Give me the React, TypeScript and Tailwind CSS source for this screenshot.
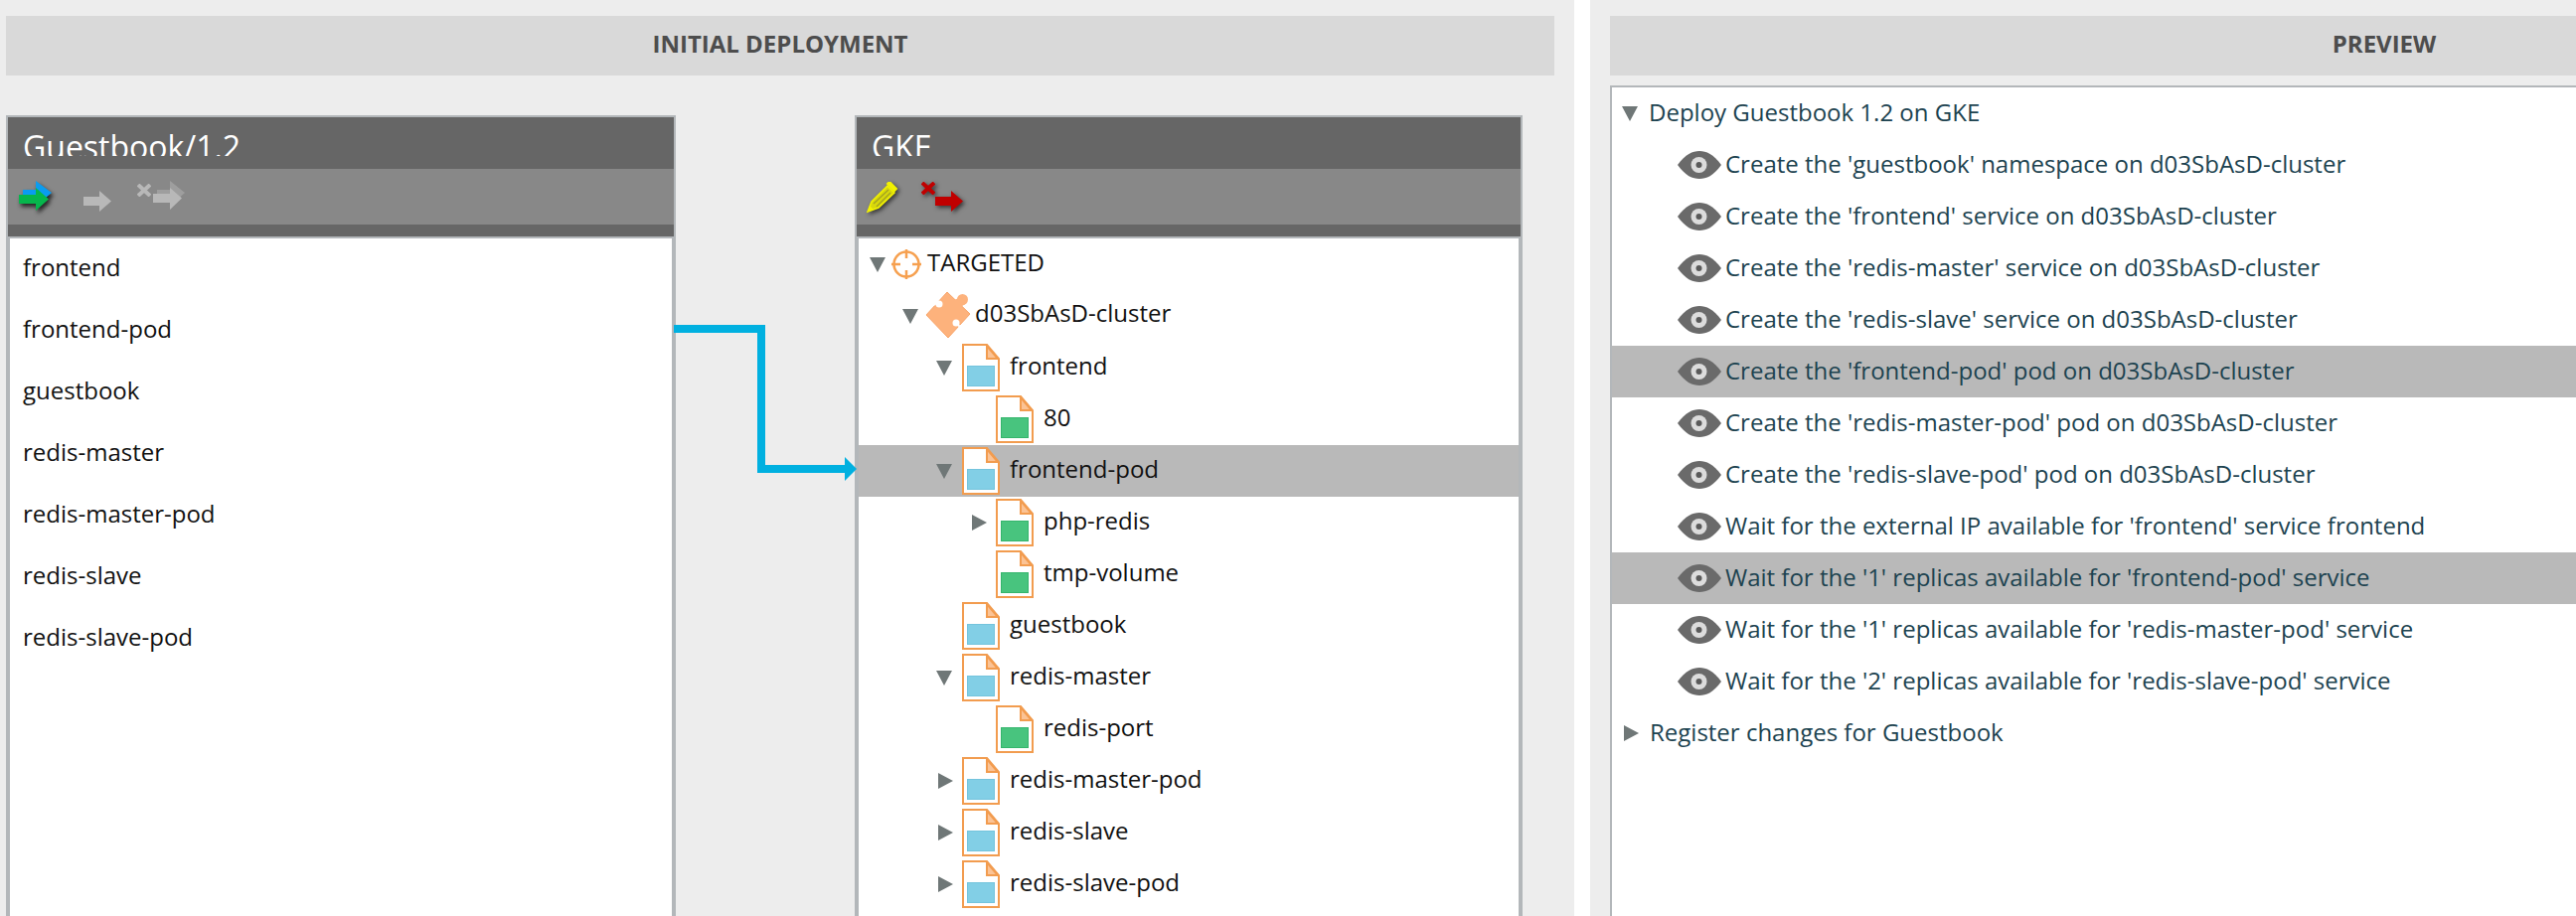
import React from 'react'

const leftItems = ['frontend', 'frontend-pod', 'guestbook', 'redis-master', 'redis-master-pod', 'redis-slave', 'redis-slave-pod']

type Row = { label: string; level: 0 | 1 | 2 | 3; open?: boolean; closed?: boolean; icon: 'target' | 'puzzle' | 'blue' | 'green'; active?: boolean }

const treeRows: Row[] = [
  { label: 'TARGETED', level: 0, open: true, icon: 'target' },
  { label: 'd03SbAsD-cluster', level: 1, open: true, icon: 'puzzle' },
  { label: 'frontend', level: 2, open: true, icon: 'blue' },
  { label: '80', level: 3, icon: 'green' },
  { label: 'frontend-pod', level: 2, open: true, icon: 'blue', active: true },
  { label: 'php-redis', level: 3, closed: true, icon: 'green' },
  { label: 'tmp-volume', level: 3, icon: 'green' },
  { label: 'guestbook', level: 2, icon: 'blue' },
  { label: 'redis-master', level: 2, open: true, icon: 'blue' },
  { label: 'redis-port', level: 3, icon: 'green' },
  { label: 'redis-master-pod', level: 2, closed: true, icon: 'blue' },
  { label: 'redis-slave', level: 2, closed: true, icon: 'blue' },
  { label: 'redis-slave-pod', level: 2, closed: true, icon: 'blue' },
]

const previewRows = [
  { label: "Create the 'guestbook' namespace on d03SbAsD-cluster" },
  { label: "Create the 'frontend' service on d03SbAsD-cluster" },
  { label: "Create the 'redis-master' service on d03SbAsD-cluster" },
  { label: "Create the 'redis-slave' service on d03SbAsD-cluster" },
  { label: "Create the 'frontend-pod' pod on d03SbAsD-cluster", active: true },
  { label: "Create the 'redis-master-pod' pod on d03SbAsD-cluster" },
  { label: "Create the 'redis-slave-pod' pod on d03SbAsD-cluster" },
  { label: "Wait for the external IP available for 'frontend' service frontend" },
  { label: "Wait for the '1' replicas available for 'frontend-pod' service", active: true },
  { label: "Wait for the '1' replicas available for 'redis-master-pod' service" },
  { label: "Wait for the '2' replicas available for 'redis-slave-pod' service" },
]

const levelPad = ['pl-[11px]', 'pl-[44px]', 'pl-[78px]', 'pl-[112px]']
const levelSlot = ['w-[21px]', 'w-[23px]', 'w-[26px]', 'w-[26px]']
const levelText = ['ml-[5px] pb-[4px]', 'ml-[4px] pb-[7px]', 'ml-[10px] pb-[4px]', 'ml-[10px] pb-[4px]']

function Caret({ open }: { open?: boolean }) {
  if (open) {
    return (
      <svg width="16" height="15" viewBox="0 0 16 15" className="block">
        <path d="M0 0H16L8 15Z" fill="#6f7777" />
      </svg>
    )
  }
  return (
    <svg width="16" height="16" viewBox="0 0 16 16" className="ml-[2px] block">
      <path d="M0 0L15 8L0 16Z" fill="#6f7777" />
    </svg>
  )
}

function PageIcon({ color, edge }: { color: string; edge: string }) {
  return (
    <svg width="38" height="48" viewBox="0 0 38 48" className="block shrink-0">
      <path d="M1 1H25L37 15V47H1Z" fill="#fff" stroke="#f29c4f" strokeWidth="2" />
      <path d="M25 2V15H36Z" fill="#fbc395" stroke="#f29c4f" strokeWidth="2" />
      <rect x="4" y="20" width="30" height="25" fill="#fff" opacity="0.6" />
      <rect x="5.5" y="22.5" width="27" height="20" fill={color} stroke={edge} strokeWidth="1" />
    </svg>
  )
}

function TargetIcon() {
  return (
    <svg width="32" height="32" viewBox="0 0 32 32" className="block shrink-0">
      <circle cx="16" cy="16" r="12.5" fill="none" stroke="#f6a04f" strokeWidth="2.5" />
      <path d="M16 1V10M16 22V31M1 16H10M22 16H31" stroke="#f6a04f" strokeWidth="2.5" />
    </svg>
  )
}

function PuzzleIcon() {
  return (
    <svg width="46" height="48" viewBox="0 0 46 48" className="-mt-[2px] block shrink-0">
      <path d="M22 1L45 23L23 47L1 24Z" fill="#fdb27c" stroke="#f8a56a" strokeWidth="1" />
      <circle cx="37.5" cy="8.5" r="5.5" fill="#fdb27c" />
      <path d="M29 9L36 6L40 13L36 16Z" fill="#fdb27c" />
      <circle cx="14" cy="13" r="3.5" fill="#fff" />
      <path d="M9 14L12 11" stroke="#fff" strokeWidth="2" />
      <circle cx="31" cy="32" r="3.5" fill="#fff" />
      <path d="M33 34L36 37" stroke="#fff" strokeWidth="2" />
    </svg>
  )
}

function EyeIcon() {
  return (
    <svg width="44" height="28" viewBox="0 0 44 28" className="block shrink-0">
      <path d="M0 14C8 3 15 0 22 0C29 0 36 3 44 14C36 25 29 28 22 28C15 28 8 25 0 14Z" fill="#6a6a6a" />
      <circle cx="21.5" cy="14" r="8" fill="#dcdcdc" />
      <circle cx="21.5" cy="14" r="3" fill="#5a5a5a" />
    </svg>
  )
}

function GrayArrow({ fill = '#b8b8b8' }: { fill?: string }) {
  return (
    <svg width="28" height="21" viewBox="0 0 28 21" className="block">
      <path d="M0 6H16V0L28 10.5L16 21V15H0Z" fill={fill} />
    </svg>
  )
}

function DeployAllIcon() {
  return (
    <svg width="36" height="38" viewBox="0 0 36 38" className="block drop-shadow-[2px_3px_2px_rgba(0,0,0,0.75)]">
      <path d="M5 9H18V0L34 12L22 22H5Z" fill="#0a9cf0" />
      <path d="M1 14H18V7L31 18.5L18 30V23H1Z" fill="#06b64c" />
    </svg>
  )
}

function DeleteDeployedIcon() {
  return (
    <div className="flex items-start">
      <svg width="14" height="13" viewBox="0 0 14 13" className="mt-[3px] block">
        <path d="M1 1L13 12M13 1L1 12" stroke="#b8b8b8" strokeWidth="4" />
      </svg>
      <svg width="32" height="33" viewBox="0 0 32 33" className="ml-[2px] block">
        <path d="M4 9H17V0L32 12L22 21H4Z" fill="#a8a8a8" opacity="0.7" />
        <path d="M0 13H17V7L29 17.5L17 29V22H0Z" fill="#b8b8b8" />
      </svg>
    </div>
  )
}

function PencilIcon() {
  return (
    <svg width="32" height="32" viewBox="0 0 32 32" className="block drop-shadow-[2px_2px_2px_rgba(0,0,0,0.6)]">
      <path d="M1 30L5 20L21 4L28 11L12 26Z" fill="#d8d80c" stroke="#f2f200" strokeWidth="1.5" />
      <path d="M7 22L22 8M10 25L24 11" stroke="#a5a520" strokeWidth="1.5" />
      <path d="M21 2L23 0L30 7L28 9Z" fill="#f2f200" stroke="#f2f200" strokeWidth="2" />
      <path d="M1 30L3 24L7 28Z" fill="#f2f200" />
    </svg>
  )
}

function DeleteIcon() {
  return (
    <div className="flex items-start drop-shadow-[2px_2px_2px_rgba(0,0,0,0.6)]">
      <svg width="14" height="13" viewBox="0 0 14 13" className="mt-[3px] block">
        <path d="M1 1L13 12M13 1L1 12" stroke="#c00000" strokeWidth="4" />
      </svg>
      <svg width="28" height="21" viewBox="0 0 28 21" className="mt-[12px] block">
        <path d="M0 6H16V0L28 10.5L16 21V15H0Z" fill="#c00000" />
      </svg>
    </div>
  )
}

function Panel({ title, tools, children, width }: { title: string; tools: React.ReactNode; children: React.ReactNode; width: string }) {
  return (
    <div className={`${width} h-[806px] shrink-0 overflow-hidden border-2 border-b-0 border-[#b3b7ba] bg-[#b3b7ba]`}>
      <div className="h-[52px] bg-[#666666]">
        <div className="h-[39px] overflow-hidden pl-[15px] text-[32px] leading-[59px] text-white">{title}</div>
      </div>
      <div className="flex h-[56px] bg-[#888888]">{tools}</div>
      <div className="h-[12px] bg-[#666666]" />
      <div className="mx-[2px] mt-[2px] h-[700px] bg-white">{children}</div>
    </div>
  )
}

function TreeRow({ row }: { row: Row }) {
  return (
    <div className={`flex h-[52px] items-center ${levelPad[row.level]} ${row.active ? 'bg-[#b9b9b9]' : ''}`}>
      <div className={`${levelSlot[row.level]} shrink-0`}>
        {row.open && <Caret open />}
        {row.closed && <Caret />}
      </div>
      {row.icon === 'target' && <TargetIcon />}
      {row.icon === 'puzzle' && <PuzzleIcon />}
      {row.icon === 'blue' && <PageIcon color="#82cfe6" edge="#74c4dd" />}
      {row.icon === 'green' && <PageIcon color="#48c47e" edge="#35b56c" />}
      <span className={`${levelText[row.level]} text-[24px] text-[#111]`}>{row.label}</span>
    </div>
  )
}

export default function App() {
  return (
    <div className="flex h-[922px] w-[2592px] overflow-hidden bg-white font-['Open_Sans',sans-serif]">
      <div className="h-full w-[1584px] shrink-0 bg-[#ededed] pl-[6px] pt-4">
        <div className="flex h-[60px] w-[1558px] items-center justify-center bg-[#d9d9d9] pb-[5px] text-[24px] font-bold text-[#4d4d4d]">
          INITIAL DEPLOYMENT
        </div>
        <div className="relative mt-10 flex w-[1526px] justify-between">
          <Panel
            title="Guestbook/1.2"
            width="w-[674px]"
            tools={
              <>
                <div className="ml-[10px] mt-[12px]"><DeployAllIcon /></div>
                <div className="ml-[30px] mt-[22px]"><GrayArrow /></div>
                <div className="ml-[26px] mt-[12px]"><DeleteDeployedIcon /></div>
              </>
            }
          >
            <div className="pl-[13px]">
              {leftItems.map((item) => (
                <div key={item} className="flex h-[62px] items-center pb-[4px] text-[24px] text-[#111]">{item}</div>
              ))}
            </div>
          </Panel>
          <Panel
            title="GKE"
            width="w-[672px]"
            tools={
              <>
                <div className="ml-[10px] mt-[13px]"><PencilIcon /></div>
                <div className="ml-[23px] mt-[10px]"><DeleteIcon /></div>
              </>
            }
          >
            {treeRows.map((row) => (
              <TreeRow key={row.label} row={row} />
            ))}
          </Panel>
          {/* connector between the two panels */}
          <svg width="186" height="170" viewBox="0 0 186 170" className="absolute left-[672px] top-[205px]">
            <path d="M0 10H88V151H176" fill="none" stroke="#00b0e0" strokeWidth="8" />
            <path d="M172 139L184 151L172 163Z" fill="#00b0e0" />
          </svg>
        </div>
      </div>
      <div className="h-full w-4 shrink-0 bg-white" />
      <div className="h-full flex-1 overflow-hidden bg-[#ededed] pl-5 pt-4">
        <div className="flex h-[60px] w-[1558px] items-center justify-center bg-[#d9d9d9] pb-[5px] text-[24px] font-bold text-[#4d4d4d]">
          PREVIEW
        </div>
        <div className="mt-[10px] h-[900px] w-[1558px] border-2 border-[#b3b7ba] bg-white text-[24px] text-[#1d4350]">
          <div className="flex h-[52px] items-center pl-[10px]">
            <Caret open />
            <span className="ml-[11px] pb-[2px]">Deploy Guestbook 1.2 on GKE</span>
          </div>
          {previewRows.map((row) => (
            <div key={row.label} className={`flex h-[52px] items-center pl-[66px] ${row.active ? 'bg-[#b9b9b9]' : ''}`}>
              <EyeIcon />
              <span className="ml-[4px] pb-[2px]">{row.label}</span>
            </div>
          ))}
          <div className="flex h-[52px] items-center pl-[10px]">
            <Caret />
            <span className="ml-[10px] pb-[2px]">Register changes for Guestbook</span>
          </div>
        </div>
      </div>
    </div>
  )
}
